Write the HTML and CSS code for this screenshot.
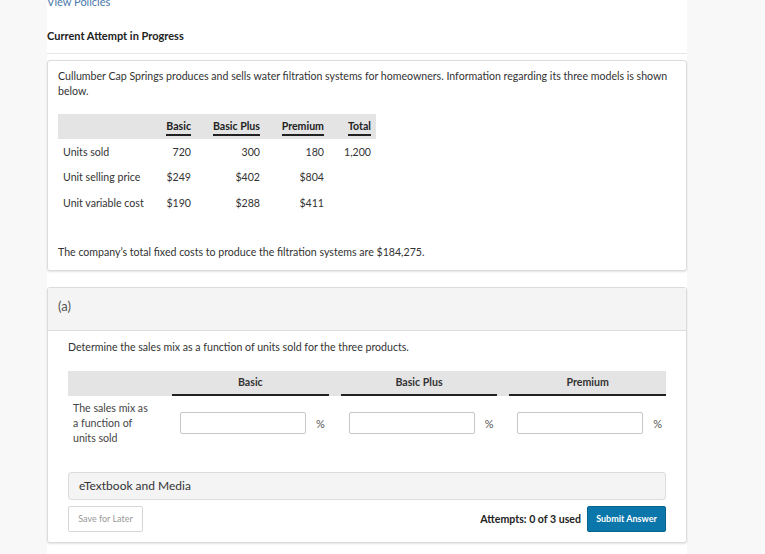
FILE: index.html
```html
<!DOCTYPE html>
<html>
<head>
<meta charset="utf-8">
<link rel="stylesheet" href="styles.css">
</head>
<body>
<div class="page">
  <a class="policies" href="#">View Policies</a>
  <div class="attempt">Current Attempt in Progress</div>
  <hr class="rule">
  <div class="card intro">
    <p class="question">Cullumber Cap Springs produces and sells water filtration systems for homeowners. Information regarding its three models is shown below.</p>
    <table class="data">
      <colgroup>
        <col class="c1"><col class="c2"><col class="c3"><col class="c4"><col class="c5">
      </colgroup>
      <thead>
        <tr><th></th><th><span>Basic</span></th><th><span>Basic Plus</span></th><th><span>Premium</span></th><th><span>Total</span></th></tr>
      </thead>
      <tbody>
        <tr><td class="lbl">Units sold</td><td>720</td><td>300</td><td>180</td><td>1,200</td></tr>
        <tr><td class="lbl">Unit selling price</td><td>$249</td><td>$402</td><td>$804</td><td></td></tr>
        <tr><td class="lbl">Unit variable cost</td><td>$190</td><td>$288</td><td>$411</td><td></td></tr>
      </tbody>
    </table>
    <p class="fixed">The company’s total fixed costs to produce the filtration systems are $184,275.</p>
  </div>

  <div class="card part">
    <div class="part-head">(a)</div>
    <div class="part-body">
      <p class="prompt">Determine the sales mix as a function of units sold for the three products.</p>
      <div class="grid head">
        <div class="g-lbl"></div>
        <div class="g-col">Basic</div>
        <div class="g-col">Basic Plus</div>
        <div class="g-col">Premium</div>
      </div>
      <div class="grid row">
        <div class="row-lbl">The sales mix as a function of units sold</div>
        <div class="cell"><input type="text" class="ans"><span class="pct">%</span></div>
        <div class="cell"><input type="text" class="ans"><span class="pct">%</span></div>
        <div class="cell"><input type="text" class="ans"><span class="pct">%</span></div>
      </div>
      <div class="media">eTextbook and Media</div>
      <div class="actions">
        <button class="save">Save for Later</button>
        <div class="right">
          <span class="attempts">Attempts: 0 of 3 used</span>
          <button class="submit">Submit Answer</button>
        </div>
      </div>
    </div>
  </div>
</div>
</body>
</html>
```

FILE: styles.css
```css
html, body {
  margin: 0;
  padding: 0;
  background: #f8f8f8;
}
body {
  font-family: Lato, "Open Sans", Arial, sans-serif;
  color: #333;
  font-size: 10.6px;
}
.page {
  width: 640px;
  margin-left: 47px;
  background: #fff;
  min-height: 560px;
  margin-top: -6px;
  padding-top: 1px;
}
.policies {
  display: block;
  color: #4a78a8;
  text-decoration: none;
  font-size: 11px;
  line-height: 14px;
}
.attempt {
  font-weight: 700;
  font-size: 11px;
  line-height: 14px;
  margin-top: 20px;
  color: #222;
}
.rule {
  border: 0;
  border-top: 1px solid #e6e6e6;
  margin: 10px 0 0 0;
}
.card {
  border: 1px solid #dcdcdc;
  border-radius: 3px;
  box-shadow: 0 1px 2px rgba(0,0,0,0.12);
  background: #fff;
}
.intro {
  margin-top: 6px;
  padding: 8px 10px 10px 10px;
}
.question {
  margin: 0;
  line-height: 15px;
  color: #333;
}
.data {
  margin-top: 15px;
  border-collapse: collapse;
  table-layout: fixed;
  width: 318px;
}
.c1 { width: 103px; }
.c2 { width: 35px; }
.c3 { width: 69px; }
.c4 { width: 64px; }
.c5 { width: 47px; }
.data thead tr {
  background: #e4e4e4;
}
.data th {
  height: 25px;
  padding: 0 5px 0 0;
  text-align: right;
  font-weight: 700;
  color: #222;
  vertical-align: middle;
}
.data th span {
  display: inline-block;
  border-bottom: 2px solid #222;
  line-height: 13px;
  padding-bottom: 1px;
  margin-top: 2px;
}
.data td {
  height: 25.5px;
  padding: 0 5px 0 0;
  text-align: right;
  vertical-align: middle;
  white-space: nowrap;
}
.data td.lbl {
  text-align: left;
  padding-left: 5px;
}
.fixed {
  margin: 29px 0 0 0;
  line-height: 15px;
}
.part {
  margin-top: 16px;
}
.part-head {
  background: #f4f4f4;
  border-bottom: 1px solid #dcdcdc;
  height: 42px;
  padding-left: 10px;
  font-size: 13px;
  line-height: 37px;
  color: #555;
}
.part-body {
  padding: 9px 20px 10px 20px;
}
.prompt {
  margin: 0;
  line-height: 15px;
}
.grid {
  display: grid;
  grid-template-columns: 92px repeat(3, 1fr);
  column-gap: 12px;
}
.g-lbl {
  margin-right: -12px;
}
.head {
  margin-top: 16px;
  background: #e4e4e4;
  height: 25px;
}
.g-col {
  border-bottom: 2px solid #222;
  text-align: center;
  font-weight: 700;
  color: #333;
  line-height: 22px;
  height: 23px;
}
.row {
  margin-top: 5px;
  align-items: center;
}
.row-lbl {
  padding-left: 5px;
  line-height: 15px;
  padding-right: 8px;
  color: #444;
}
.cell {
  display: flex;
  align-items: center;
  padding-left: 8px;
}
.ans {
  width: 126px;
  height: 22px;
  box-sizing: border-box;
  border: 1px solid #c8c8c8;
  border-radius: 2px;
  margin: 0;
  padding: 0 4px;
}
.pct {
  margin-left: 10px;
  color: #555;
  font-size: 11px;
}
.media {
  margin-top: 26px;
  background: #f4f4f4;
  border: 1px solid #dcdcdc;
  border-radius: 3px;
  height: 26px;
  line-height: 26px;
  padding-left: 10px;
  font-size: 12px;
  color: #333;
}
.actions {
  margin-top: 6px;
  display: flex;
  justify-content: space-between;
  align-items: center;
}
.save {
  font-family: Lato, Arial, sans-serif;
  font-size: 9px;
  color: #999;
  background: #fff;
  border: 1px solid #d6d6d6;
  border-radius: 2px;
  width: 75px;
  height: 26px;
  padding: 0;
}
.right {
  display: flex;
  align-items: center;
  gap: 6px;
}
.attempts {
  font-weight: 700;
  color: #222;
  font-size: 10.6px;
}
.submit {
  font-family: Lato, Arial, sans-serif;
  font-size: 9px;
  font-weight: 700;
  color: #fff;
  background: #0a76aa;
  border: 1px solid #07638f;
  border-radius: 2px;
  width: 79px;
  height: 26px;
  padding: 0;
}
```
